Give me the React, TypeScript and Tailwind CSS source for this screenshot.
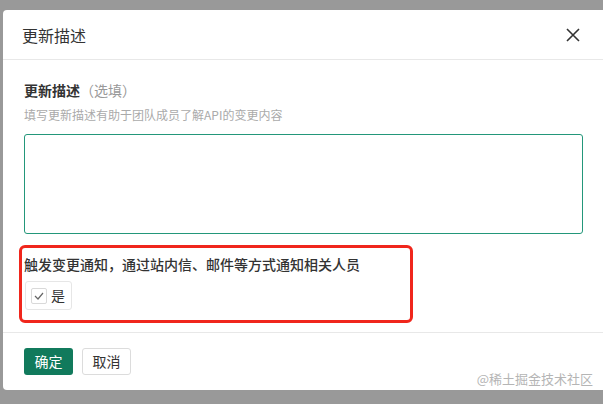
export default function App() {
  return (
    <div
      className="flex h-[404px] w-[603px] flex-col overflow-hidden bg-[#999999] pt-[10px] pl-[3px]"
      style={{ fontFamily: '"Noto Sans CJK SC", "Liberation Sans", sans-serif' }}
    >
      <div className="relative h-[380px] w-[620px] rounded-[4px] bg-white">
        {/* header */}
        <div className="flex h-[50px] items-center justify-between border-b border-[#e8e8e8] pr-[40px] pl-[19px]">
          <span className="text-[16px] text-[#333]">更新描述</span>
          <svg width="14" height="14" viewBox="0 0 14 14" className="mr-[3px]">
            <path d="M1 1 L13 13 M13 1 L1 13" stroke="#333" strokeWidth="1.6" />
          </svg>
        </div>

        {/* body */}
        <div className="pt-[20px] pr-[37px] pl-[21px]">
          <div className="text-[14px] leading-[20px] font-bold text-[#333]">
            更新描述<span className="font-normal text-[#999]">（选填）</span>
          </div>
          <div className="mt-[6px] text-[12px] leading-[17px] text-[#aaa]">
            填写更新描述有助于团队成员了解API的变更内容
          </div>
          <div className="mt-[11px] h-[100px] w-[559px] rounded-[3px] border border-[#23977a]" />

          <div className="mt-[11px] -ml-[5px] h-[78px] w-[394px] rounded-[6px] border-[3px] border-[#f0261c] pt-[6px] pl-[2px]">
            <div className="text-[14px] leading-[20px] font-medium text-[#333]">
              触发变更通知，通过站内信、邮件等方式通知相关人员
            </div>
            <div className="mt-[7px] ml-[1px] inline-flex h-[29px] items-center gap-[4px] rounded-[3px] border border-[#e6e6e6] pr-[6px] pl-[5px]">
              <span className="flex h-[16px] w-[16px] items-center justify-center rounded-[2px] border border-[#d9d9d9]">
                <svg width="10" height="8" viewBox="0 0 10 8">
                  <path d="M1 4 L4 7 L9 1" fill="none" stroke="#666" strokeWidth="1.2" />
                </svg>
              </span>
              <span className="text-[14px] text-[#333]">是</span>
            </div>
          </div>
        </div>

        {/* footer */}
        <div className="mt-[9px] flex gap-[9px] border-t border-[#e8e8e8] pt-[15px] pl-[21px]">
          <button className="h-[27px] w-[49px] rounded-[3px] bg-[#117a5c] text-[14px] text-white">确定</button>
          <button className="h-[27px] w-[49px] rounded-[3px] border border-[#dcdcdc] bg-white text-[14px] text-[#333]">
            取消
          </button>
        </div>

        <span className="absolute right-[30px] bottom-[2px] text-[13px] text-[#b5b5b5]">@稀土掘金技术社区</span>
      </div>
    </div>
  )
}
